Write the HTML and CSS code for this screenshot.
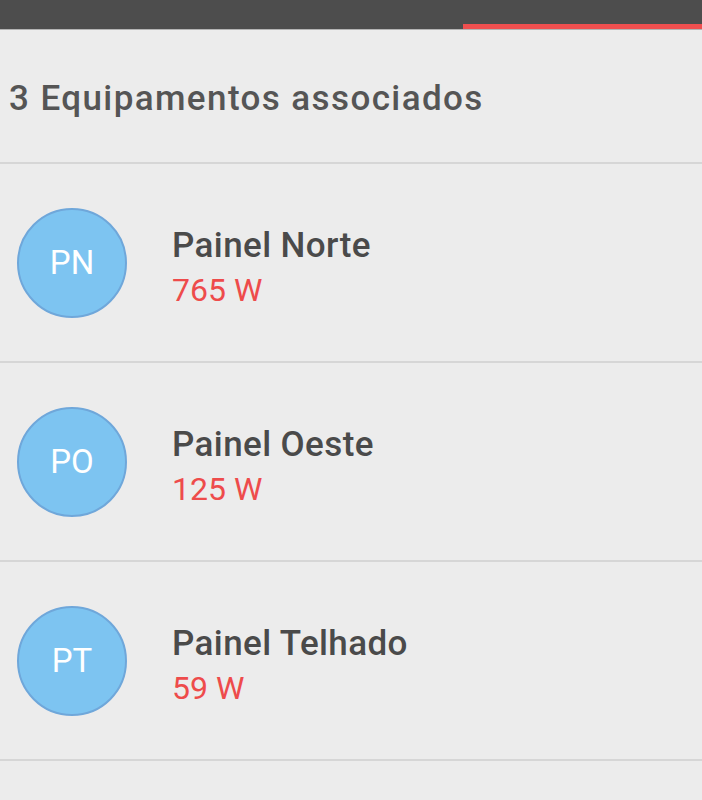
FILE: index.html
```html
<!DOCTYPE html>
<html lang="pt">
<head>
    <meta charset="UTF-8">
    <meta name="viewport" content="width=device-width, initial-scale=1.0">
    <title>Equipamentos</title>
    <link rel="stylesheet" href="styles.css">
</head>
<body>
    <div class="tabbar">
        <div class="tab"></div>
        <div class="tab active"></div>
    </div>
    <div class="summary">3 Equipamentos associados</div>
    <ul class="list">
        <li class="item">
            <div class="avatar">PN</div>
            <div class="info">
                <div class="name">Painel Norte</div>
                <div class="power">765 W</div>
            </div>
        </li>
        <li class="item">
            <div class="avatar">PO</div>
            <div class="info">
                <div class="name">Painel Oeste</div>
                <div class="power">125 W</div>
            </div>
        </li>
        <li class="item">
            <div class="avatar">PT</div>
            <div class="info">
                <div class="name">Painel Telhado</div>
                <div class="power">59 W</div>
            </div>
        </li>
    </ul>
</body>
</html>
```

FILE: styles.css
```css
body {
    font-family: Roboto, "Noto Sans", sans-serif;
    margin: 0;
    background: #ececec;
    color: #4a4a4a;
}
.tabbar {
    display: flex;
    height: 29px;
    background: #4d4d4d;
    border-bottom: 1px solid #b4b4b4;
}
.tab {
    flex: 463;
}
.tab.active {
    flex: 239;
    border-bottom: 5px solid #ef4f4f;
}
.summary {
    height: 44px;
    padding: 47px 0 41px 9px;
    font-size: 35px;
    font-weight: 500;
    line-height: 44px;
    letter-spacing: 1.4px;
    color: #555;
    border-bottom: 2px solid #d6d6d6;
}
.list {
    list-style: none;
    margin: 0;
    padding: 0;
}
.item {
    height: 197px;
    display: flex;
    align-items: center;
    border-bottom: 2px solid #d6d6d6;
}
.avatar {
    width: 106px;
    height: 106px;
    margin-left: 17px;
    border-radius: 50%;
    background: #7dc4f1;
    border: 2px solid #6fa7da;
    color: #fff;
    font-size: 33px;
    display: flex;
    align-items: center;
    justify-content: center;
}
.info {
    margin-left: 45px;
    margin-top: 11px;
}
.name {
    font-size: 35px;
    font-weight: 500;
    line-height: 44px;
    letter-spacing: 0.4px;
}
.power {
    font-size: 32px;
    color: #ee4b4b;
    line-height: 44px;
}
```
